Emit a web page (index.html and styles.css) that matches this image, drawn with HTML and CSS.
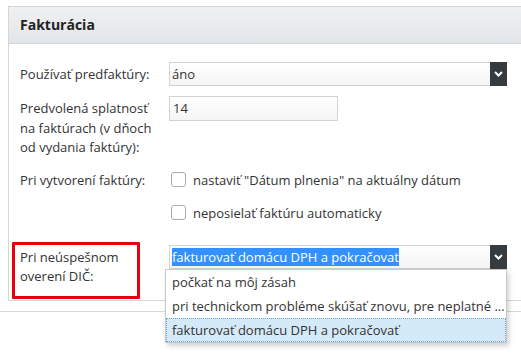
FILE: index.html
```html
<!DOCTYPE html>
<html lang="sk">
<head>
	<meta charset="UTF-8">
	<title>Fakturácia</title>
	<link rel="stylesheet" href="styles.css">
</head>
<body>
	<div class="page">
		<div class="panel">
			<div class="panel-head">Fakturácia</div>
			<div class="panel-body">
				<div class="row">
					<div class="label">Používať predfaktúry:</div>
					<div class="field">
						<div class="select">
							<span class="select-text">áno</span>
							<span class="select-arrow"><svg width="9" height="6" viewBox="0 0 9 6"><path d="M1 1 L4.5 4.5 L8 1" fill="none" stroke="#fff" stroke-width="2"/></svg></span>
						</div>
					</div>
				</div>

				<div class="row">
					<div class="label label-multi">Predvolená splatnosť na faktúrach (v dňoch od vydania faktúry):</div>
					<div class="field">
						<div class="input">14</div>
					</div>
				</div>

				<div class="row row-checks">
					<div class="label">Pri vytvorení faktúry:</div>
					<div class="field checks">
						<label class="check"><span class="box"></span>nastaviť "Dátum plnenia" na aktuálny dátum</label>
						<label class="check"><span class="box"></span>neposielať faktúru automaticky</label>
					</div>
				</div>

				<div class="row">
					<div class="label label-multi marked">Pri neúspešnom overení DIČ:</div>
					<div class="field">
						<div class="select">
							<span class="select-text"><span class="sel">fakturovať domácu DPH a pokračovať</span></span>
							<span class="select-arrow"><svg width="9" height="6" viewBox="0 0 9 6"><path d="M1 1 L4.5 4.5 L8 1" fill="none" stroke="#fff" stroke-width="2"/></svg></span>
							<ul class="dropdown">
								<li>počkať na môj zásah</li>
								<li>pri technickom probléme skúšať znovu, pre neplatné ...</li>
								<li class="active">fakturovať domácu DPH a pokračovať</li>
							</ul>
						</div>
					</div>
				</div>
			</div>
		</div>
		<div class="rule"></div>
	</div>
</body>
</html>
```

FILE: styles.css
```css
* {
	box-sizing: border-box;
}

html {
	overflow: hidden;
}

body {
	margin: 0;
	background: #fff;
	font-family: "Open Sans", "Noto Sans", sans-serif;
	font-size: 13px;
	color: #333;
}

.page {
	width: 521px;
	height: 357px;
	overflow: hidden;
	padding-top: 6px;
}

.panel {
	margin-left: 8px;
	width: 540px;
	border: 1px solid #d6d6d6;
}

.panel-head {
	height: 37px;
	padding: 0 11px;
	line-height: 36px;
	font-size: 14px;
	font-weight: bold;
	color: #222;
	background: linear-gradient(#eef0f1, #e3e6e8);
	border-bottom: 1px solid #d2d4d6;
}

.panel-body {
	padding: 18px 0 13px 11px;
}

.row {
	display: flex;
	margin-bottom: 10px;
}

.row-checks {
	margin-bottom: 20px;
}

.row:last-child {
	margin-bottom: 0;
}

.label {
	width: 149px;
	flex: none;
	line-height: 24px;
}

.label-multi {
	line-height: 19.5px;
	padding: 3px 10px 0 0;
}

.marked {
	position: relative;
	padding-right: 30px;
}

.marked::after {
	content: "";
	position: absolute;
	left: -8px;
	top: -3px;
	width: 122px;
	height: 51px;
	border: 3px solid #e8000c;
	border-radius: 1px;
}

.select {
	position: relative;
	display: flex;
	width: 338px;
	height: 24px;
	border: 1px solid #d3d3d3;
	background: linear-gradient(#fff, #f4f4f4);
}

.select-text {
	flex: 1;
	padding-left: 2px;
	line-height: 22px;
	color: #333;
}

.select-arrow {
	width: 17px;
	margin: -1px -1px -1px 0;
	background: #353b3f;
	display: flex;
	align-items: center;
	justify-content: center;
}

.sel {
	display: inline-block;
	background: #3390ff;
	color: #fff;
	line-height: 18px;
}

.input {
	width: 169px;
	height: 25px;
	border: 1px solid #d3d3d3;
	background: linear-gradient(#fff, #f5f5f5);
	padding-left: 3px;
	line-height: 23px;
}

.checks {
	display: flex;
	flex-direction: column;
	gap: 9px;
}

.check {
	display: flex;
	align-items: center;
	height: 24px;
	padding-left: 2px;
}

.box {
	width: 15px;
	height: 15px;
	margin-right: 7px;
	border: 1.5px solid #ababab;
	border-radius: 3px;
	background: #fff;
}

.dropdown {
	position: absolute;
	top: 23px;
	left: -5px;
	right: -1px;
	margin: 0;
	padding: 0;
	list-style: none;
	background: #fff;
	border: 1px solid #c8c8c8;
	box-shadow: 2px 3px 5px rgba(0, 0, 0, 0.18);
	z-index: 2;
}

.dropdown li {
	height: 24px;
	line-height: 24px;
	padding-left: 6px;
	white-space: nowrap;
	overflow: hidden;
}

.dropdown li.active {
	background: #d5eaf8;
	border: 1px dotted #7ca3d8;
	padding-left: 5px;
	line-height: 22px;
}

.rule {
	margin-top: 10px;
	border-top: 1px solid #d8d8d8;
}
```
